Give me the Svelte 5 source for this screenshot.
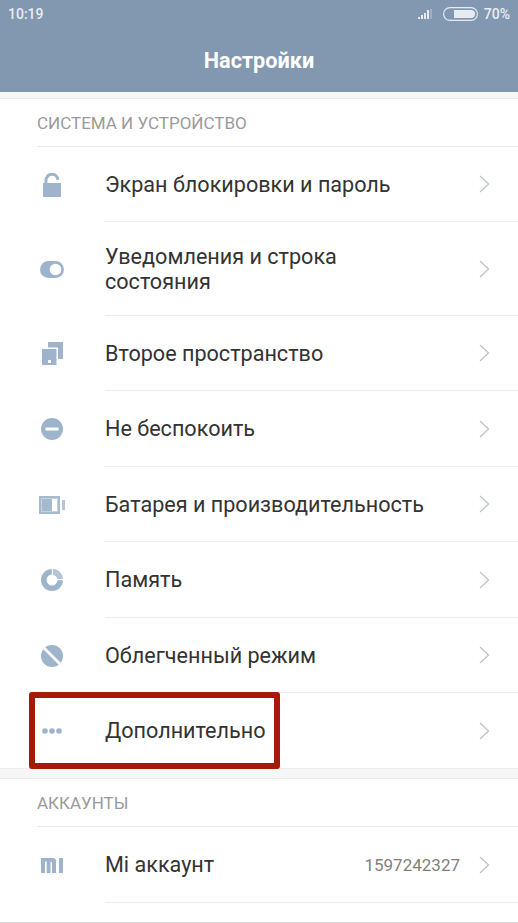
<script>
  const systemRows = [
    { id: 'lock', label: 'Экран блокировки и пароль' },
    { id: 'toggle', label: 'Уведомления и строка состояния', tall: true },
    { id: 'space', label: 'Второе пространство' },
    { id: 'dnd', label: 'Не беспокоить' },
    { id: 'battery', label: 'Батарея и производительность' },
    { id: 'storage', label: 'Память' },
    { id: 'lite', label: 'Облегченный режим' },
    { id: 'more', label: 'Дополнительно', marked: true }
  ];
</script>

<div class="screen">
  <header class="top">
    <div class="status">
      <span class="time">10:19</span>
      <div class="status-right">
        <svg width="16" height="10" viewBox="0 0 16 10" class="signal">
          <rect x="0" y="8" width="2" height="2" fill="#e6ebf1" />
          <rect x="3" y="6" width="2" height="4" fill="#e6ebf1" />
          <rect x="6" y="4" width="2" height="6" fill="#e6ebf1" />
          <rect x="9" y="1" width="2" height="9" fill="#e6ebf1" />
          <rect x="12" y="0" width="2" height="10" fill="#9fb0c4" />
        </svg>
        <svg width="36" height="14" viewBox="0 0 36 14" class="batt">
          <rect x="0.6" y="0.6" width="33.8" height="12.8" rx="6.4" fill="none" stroke="#e6ebf1" stroke-width="1.1" />
          <path d="M11 3h17a4 4 0 0 1 0 8H11z" fill="#e6ebf1" />
        </svg>
        <span class="pct">70%</span>
      </div>
    </div>
    <h1>Настройки</h1>
  </header>

  <div class="gap first"></div>

  <section>
    <h2>СИСТЕМА И УСТРОЙСТВО</h2>
    {#each systemRows as row}
      <div class="row" class:tall={row.tall} class:marked={row.marked}>
        <div class="icon">
          {#if row.id === 'lock'}
            <svg width="18" height="24" viewBox="0 0 18 24">
              <path d="M3 11V7.5a6 6 0 0 1 12 -0.6" fill="none" stroke="#9db4cc" stroke-width="3" />
              <path d="M0 10h18v14H0z" fill="#9db4cc" />
            </svg>
          {:else if row.id === 'toggle'}
            <svg width="24" height="17" viewBox="0 0 24 17">
              <rect width="24" height="17" rx="8.5" fill="#9db4cc" />
              <circle cx="15.5" cy="8.5" r="5.8" fill="#fff" />
            </svg>
          {:else if row.id === 'space'}
            <svg width="21" height="23" viewBox="0 0 21 23">
              <path d="M6 0h15v17h-5V5.5H6z" fill="#9db4cc" />
              <path d="M0 7h14.5v16H0z" fill="#9db4cc" />
              <rect x="6" y="18" width="3" height="3" fill="#fff" />
            </svg>
          {:else if row.id === 'dnd'}
            <svg width="22" height="22" viewBox="0 0 22 22">
              <circle cx="11" cy="11" r="11" fill="#9db4cc" />
              <rect x="4.5" y="9.5" width="13" height="3" fill="#fff" />
            </svg>
          {:else if row.id === 'battery'}
            <svg width="26" height="18" viewBox="0 0 26 18">
              <path d="M0 0h21v18H0z" fill="#a5bace" />
              <rect x="2" y="2" width="17" height="14" fill="#c6d4e1" />
              <rect x="3" y="3" width="10" height="12" fill="#a5bace" />
              <rect x="13" y="3" width="5" height="12" fill="#fff" />
              <rect x="23" y="4" width="3" height="10" fill="#b3c5d6" />
            </svg>
          {:else if row.id === 'storage'}
            <svg width="22" height="22" viewBox="0 0 22 22">
              <circle cx="11" cy="11" r="8.25" fill="none" stroke="#9db4cc" stroke-width="5.5" />
              <path d="M11.5 0v6M16 10.5h6" stroke="#fff" stroke-width="1.4" />
              <path d="M12.2 0.1A11 11 0 0 1 21.9 9.8h-5.6a5.5 5.5 0 0 0-4.1-4.1z" fill="#b3c5d6" />
            </svg>
          {:else if row.id === 'lite'}
            <svg width="22" height="22" viewBox="0 0 22 22">
              <circle cx="11" cy="11" r="11" fill="#9db4cc" />
              <path d="M3 3L19.5 19.5" stroke="#fff" stroke-width="2.6" />
            </svg>
          {:else}
            <svg width="20" height="6" viewBox="0 0 20 6">
              <circle cx="3" cy="3" r="2.8" fill="#9db4cc" />
              <circle cx="10" cy="3" r="2.8" fill="#9db4cc" />
              <circle cx="17" cy="3" r="2.8" fill="#9db4cc" />
            </svg>
          {/if}
        </div>
        <div class="body">
          <span class="label">{row.label}</span>
          <svg class="chev" width="11" height="18" viewBox="0 0 11 18">
            <path d="M1 1l8.5 8L1 17" fill="none" stroke="#bfc3c7" stroke-width="1.3" />
          </svg>
        </div>
        {#if row.marked}<div class="mark"></div>{/if}
      </div>
    {/each}
  </section>

  <div class="gap"></div>

  <section class="last">
    <h2>АККАУНТЫ</h2>
    <div class="row">
      <div class="icon">
        <svg width="22" height="15" viewBox="0 0 22 15">
          <path d="M0 0h12a3 3 0 0 1 3 3v12h-4V5a1.5 1.5 0 0 0-1.5-1.5V15H5.7V3.5H4V15H0z" fill="#9db4cc" />
          <rect x="18" y="0" width="4" height="15" fill="#9db4cc" />
        </svg>
      </div>
      <div class="body">
        <span class="label">Mi аккаунт</span>
        <span class="value">1597242327</span>
        <svg class="chev" width="11" height="18" viewBox="0 0 11 18">
          <path d="M1 1l8.5 8L1 17" fill="none" stroke="#bfc3c7" stroke-width="1.3" />
        </svg>
      </div>
    </div>
  </section>
</div>

<style>
  :global(body) {
    margin: 0;
    background: #fff;
  }

  .screen {
    width: 518px;
    height: 923px;
    overflow: hidden;
    font-family: Roboto, "Noto Sans", sans-serif;
    background: #fff;
  }

  .top {
    height: 92px;
    background: #8298b0;
    color: #fff;
  }

  .status {
    display: flex;
    align-items: center;
    justify-content: space-between;
    height: 28px;
    padding: 0 8px;
    color: #e8edf2;
    font-size: 14px;
    font-weight: 500;
  }

  .status-right {
    display: flex;
    align-items: center;
  }

  .signal {
    margin-right: 9px;
  }

  .batt {
    margin-right: 5px;
  }

  h1 {
    margin: 16px 0 0;
    text-align: center;
    font-size: 21.7px;
    font-weight: 700;
    line-height: 34px;
  }

  .gap {
    height: 9px;
    background: #f7f7f7;
    border-top: 1px solid #ececec;
    border-bottom: 1px solid #ececec;
  }

  .gap.first {
    height: 6px;
    border-top: none;
  }

  h2 {
    margin: 0 0 0 37px;
    height: 48px;
    line-height: 49px;
    font-size: 17px;
    font-weight: 400;
    color: #9a9a9a;
    border-bottom: 1px solid #e8e8e8;
    box-sizing: border-box;
  }

  .row {
    position: relative;
    display: flex;
    height: 75.49px;
  }

  .row.tall {
    height: 93.5px;
  }

  .row.marked {
    height: 75px;
  }

  .icon {
    flex: 0 0 105px;
    box-sizing: border-box;
    padding: 0 40px 0 39px;
    display: flex;
    align-items: center;
    justify-content: center;
  }

  .body {
    flex: 1;
    min-width: 0;
    display: flex;
    align-items: center;
    padding-right: 28px;
    border-bottom: 1px solid #ececec;
  }

  .row.marked .body {
    border-bottom: none;
  }

  .label {
    flex: 1;
    max-width: 335px;
    font-size: 21.6px;
    line-height: 25px;
    color: #333;
  }

  .value {
    margin-left: auto;
    margin-right: 19px;
    font-size: 17px;
    color: #7f7f7f;
  }

  .chev {
    margin-left: auto;
    flex-shrink: 0;
  }

  .value + .chev {
    margin-left: 0;
  }

  .mark {
    position: absolute;
    left: 29px;
    top: -1px;
    width: 251px;
    height: 77px;
    box-sizing: border-box;
    border: 6px solid #a61a08;
    border-radius: 3px;
  }

  .last {
    border-bottom: 1px solid #dcdcdc;
    height: 144px;
    box-sizing: border-box;
  }
</style>
